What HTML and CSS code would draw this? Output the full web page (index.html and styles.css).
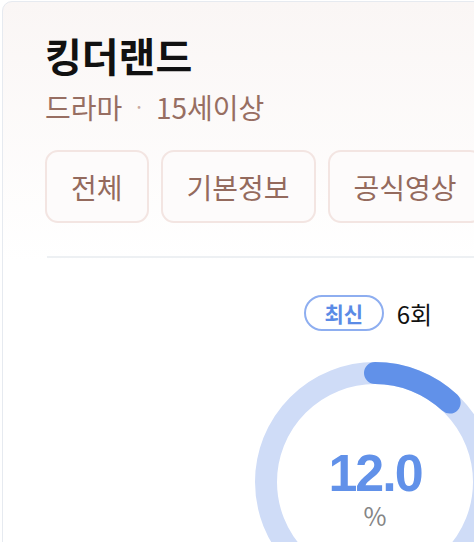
FILE: index.html
```html
<!DOCTYPE html>
<html lang="ko">
<head>
<meta charset="utf-8">
<link rel="stylesheet" href="styles.css">
</head>
<body>
<div class="card">
  <header class="head">
    <h1 class="title">킹더랜드</h1>
    <div class="meta"><span>드라마</span><span class="dot">·</span><span>15세이상</span></div>
  </header>
  <nav class="tabs">
    <button class="tab">전체</button>
    <button class="tab">기본정보</button>
    <button class="tab">공식영상</button>
    <button class="tab">출연진</button>
  </nav>
  <hr class="divider">
  <section class="stats">
    <div class="latest"><span class="badge">최신</span><span class="ep">6회</span></div>
    <div class="gauge">
      <svg class="ring" width="240" height="240" viewBox="0 0 240 240">
        <circle cx="120" cy="120" r="109" fill="none" stroke="#cfdcf7" stroke-width="22"/>
        <circle cx="120" cy="120" r="109" fill="none" stroke="#6191e9" stroke-width="22" stroke-linecap="round" stroke-dasharray="82.2 700" transform="rotate(-90 120 120)"/>
      </svg>
      <div class="value"><span class="num">12.0</span><span class="unit">%</span></div>
    </div>
  </section>
</div>
</body>
</html>
```
FILE: styles.css
```css
html, body {
  margin: 0;
  padding: 0;
  overflow: hidden;
  background: #fff;
}
body {
  font-family: "Noto Sans CJK KR", "Noto Sans", sans-serif;
}
.card {
  margin: 1px 0 0 2px;
  width: 760px;
  border: 1px solid #e6eaf0;
  border-radius: 10px;
  background: linear-gradient(180deg, #faf6f5 0px, #ffffff 260px);
  padding: 26px 44px 40px 42px;
  box-sizing: border-box;
}
.title {
  margin: 0;
  font-size: 40px;
  font-weight: 700;
  line-height: 54px;
  color: #111;
}
.meta {
  display: flex;
  align-items: center;
  gap: 14px;
  font-size: 28px;
  line-height: 40px;
  color: #976e62;
  margin-top: 5px;
}
.dot {
  color: #c9aaa0;
  font-size: 20px;
}
.tabs {
  display: flex;
  gap: 12px;
  margin-top: 23px;
}
.tab {
  flex: none;
  height: 73px;
  padding: 0 24px;
  border: 2px solid #f3e5e2;
  border-radius: 13px;
  background: #fdfbfb;
  font-family: inherit;
  font-size: 28px;
  color: #946a5d;
}
.divider {
  border: 0;
  height: 2px;
  background: #edf0f3;
  margin: 33px 0 0 2px;
}
.stats {
  display: flex;
  flex-direction: column;
  align-items: center;
  padding-right: 12px;
}
.latest {
  display: flex;
  align-items: center;
  gap: 13px;
  margin-top: 37px;
  margin-right: 14px;
}
.badge {
  display: flex;
  align-items: center;
  justify-content: center;
  width: 76px;
  height: 32px;
  border: 2px solid #8eaef0;
  border-radius: 18px;
  color: #5b8be6;
  font-size: 21px;
  font-weight: 700;
}
.ep {
  font-size: 24px;
  color: #111;
}
.gauge {
  display: grid;
  margin-top: 31px;
}
.ring, .value {
  grid-area: 1 / 1;
}
.value {
  display: flex;
  flex-direction: column;
  align-items: center;
  justify-content: center;
}
.num {
  font-family: "Liberation Sans", Arial, sans-serif;
  font-size: 52px;
  font-weight: 700;
  color: #6191e9;
  line-height: 44px;
  letter-spacing: -2px;
  margin-top: 17px;
}
.unit {
  font-size: 25px;
  color: #858585;
  line-height: 30px;
  margin-top: 5px;
}
```
